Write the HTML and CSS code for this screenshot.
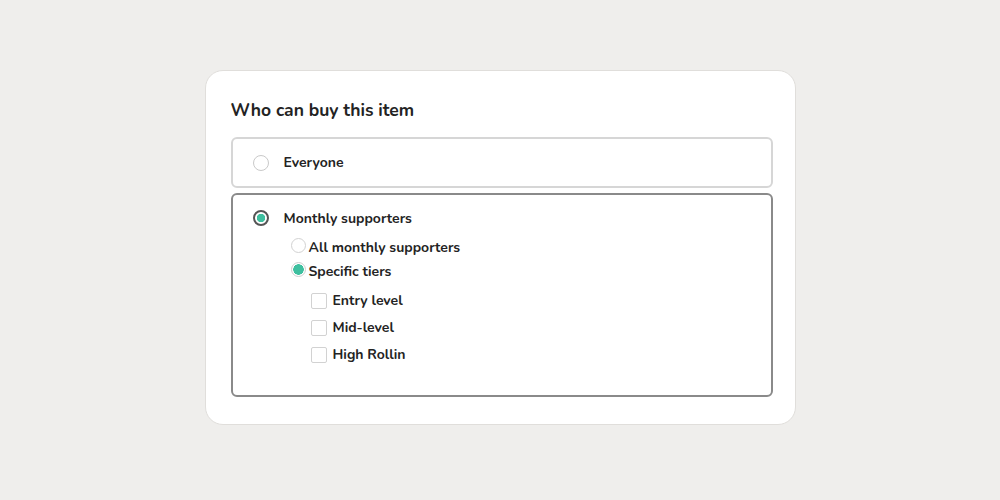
FILE: index.html
```html
<!DOCTYPE html>
<html lang="en">
    <head>
        <meta charset="UTF-8" />
        <title>Who can buy this item</title>
        <link rel="stylesheet" href="styles.css">
    </head>
    <body>
        <div class="card">
            <h2 class="title">Who can buy this item</h2>

            <!-- 첫번째 옵션 -->
            <div class="opt">
                <div class="row">
                    <span class="radio"></span>
                    <span class="lbl">Everyone</span>
                </div>
            </div>

            <!-- 선택된 옵션 -->
            <div class="opt on">
                <div class="row">
                    <span class="radio checked"></span>
                    <span class="lbl">Monthly supporters</span>
                </div>
                <div class="sub">
                    <div class="srow">
                        <span class="sradio"></span>
                        <span class="lbl">All monthly supporters</span>
                    </div>
                    <div class="srow">
                        <span class="sradio checked"></span>
                        <span class="lbl">Specific tiers</span>
                    </div>
                    <div class="tiers">
                        <div class="crow"><span class="chk"></span><span class="lbl">Entry level</span></div>
                        <div class="crow"><span class="chk"></span><span class="lbl">Mid-level</span></div>
                        <div class="crow"><span class="chk"></span><span class="lbl">High Rollin</span></div>
                    </div>
                </div>
            </div>
        </div>
    </body>
</html>
```

FILE: styles.css
```css
html, body {
    margin: 0;
    height: 100%;
}
body {
    background-color: #efeeec;
    font-family: "Nunito", "Lato", "Noto Sans", sans-serif;
    color: #232323;
    padding-top: 70px;
    box-sizing: border-box;
}

/* 카드 박스 */
.card {
    width: 591px;
    height: 355px;
    margin: 0 auto;
    box-sizing: border-box;
    background-color: #fff;
    border: 1px solid #e0dedb;
    border-radius: 18px;
    padding: 27px 22px 0 25px;
}
.title {
    margin: 0 0 15px;
    font-size: 17.5px;
    font-weight: bold;
    line-height: 24px;
}

/* 옵션박스 */
.opt {
    border: 2px solid #d6d6d6;
    border-radius: 6px;
    padding: 0 0 0 20px;
    height: 51px;
    box-sizing: border-box;
    margin-bottom: 5px;
}
.opt.on {
    border-color: #8a8a8a;
    height: 204px;
    padding-top: 6px;
}
.row {
    display: flex;
    align-items: center;
    gap: 15px;
    height: 47px;
}
.opt.on .row {
    height: 34px;
}
.lbl {
    font-size: 14px;
    font-weight: bold;
}

/* 라디오 */
.radio {
    width: 16px;
    height: 16px;
    box-sizing: border-box;
    border: 1.5px solid #c9c9c9;
    border-radius: 50%;
}
.radio.checked {
    border: 2px solid #555;
    background: radial-gradient(circle, #3fbf9f 0 4px, #fff 4.5px);
}

/* 하위 항목 */
.sub {
    padding-left: 38px;
}
.srow {
    display: flex;
    align-items: center;
    height: 24px;
}
.sradio {
    width: 15px;
    height: 15px;
    box-sizing: border-box;
    border: 1px solid #d2d2d2;
    border-radius: 50%;
    margin-right: 3px;
    position: relative;
    top: -2px;
}
.sradio.checked {
    border: 1px solid #cfcfcf;
    background: radial-gradient(circle, #3fbf9f 0 5px, #fff 5.5px);
}
.tiers {
    padding: 4px 0 0 20px;
}
.crow {
    display: flex;
    align-items: center;
    gap: 6px;
    height: 27px;
}
.chk {
    width: 16px;
    height: 16px;
    box-sizing: border-box;
    border: 1.5px solid #d2d2d2;
    border-radius: 2px;
}
```
